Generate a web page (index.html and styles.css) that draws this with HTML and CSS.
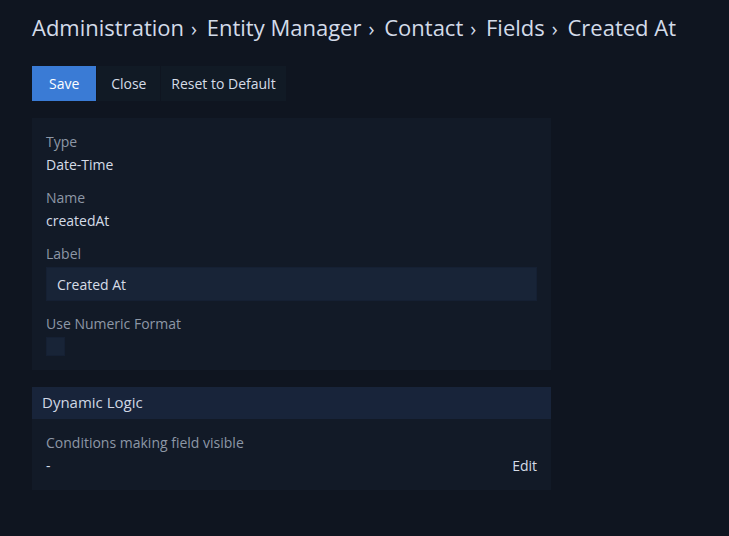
FILE: index.html
```html
<!DOCTYPE html>
<html lang="en">
<head>
  <meta charset="UTF-8">
  <title>Created At - Fields</title>
  <link rel="stylesheet" href="styles.css">
</head>
<body>

  <div class="page">
    <h1 class="breadcrumb">
      <span>Administration</span><span class="sep">›</span>
      <span>Entity Manager</span><span class="sep">›</span>
      <span>Contact</span><span class="sep">›</span>
      <span>Fields</span><span class="sep">›</span>
      <span>Created At</span>
    </h1>

    <div class="btn-group">
      <button class="btn btn-primary">Save</button>
      <button class="btn btn-close">Close</button>
      <button class="btn">Reset to Default</button>
    </div>

    <div class="panel">
      <div class="panel-body">
        <div class="field">
          <div class="field-label">Type</div>
          <div class="field-value">Date-Time</div>
        </div>
        <div class="field">
          <div class="field-label">Name</div>
          <div class="field-value">createdAt</div>
        </div>
        <div class="field">
          <div class="field-label">Label</div>
          <input class="form-control" type="text" value="Created At">
        </div>
        <div class="field">
          <div class="field-label">Use Numeric Format</div>
          <span class="checkbox"></span>
        </div>
      </div>
    </div>

    <div class="panel">
      <div class="panel-heading">Dynamic Logic</div>
      <div class="panel-body">
        <div class="field">
          <div class="field-label">Conditions making field visible</div>
          <div class="logic-row">
            <span class="field-value">-</span>
            <a href="#" class="edit-link">Edit</a>
          </div>
        </div>
      </div>
    </div>
  </div>

</body>
</html>
```

FILE: styles.css
```css
body {
  font-family: 'Open Sans', 'Noto Sans', sans-serif;
  font-size: 14px;
  margin: 0;
  background-color: #0f1520;
  color: #d5dce7;
}

.page {
  padding: 0 32px;
  width: 519px;
}

.breadcrumb {
  margin: 0;
  padding-top: 11px;
  font-size: 22px;
  font-weight: normal;
  line-height: 32px;
  color: #d3dbe9;
  white-space: nowrap;
}

.breadcrumb .sep {
  margin: 0 4px 0 7px;
  font-size: 20px;
}

.btn-group {
  display: flex;
  margin-top: 21px;
  margin-bottom: 17px;
}

.btn {
  font-family: inherit;
  font-size: 14px;
  color: #d5dce7;
  background-color: #111a25;
  border: none;
  height: 35px;
  padding: 0 10px;
  cursor: pointer;
}

.btn + .btn {
  border-left: 1px solid #0f1520;
}

.btn-primary {
  background-color: #3a7bd5;
  color: #ffffff;
  padding: 0 17px;
}

.btn-close {
  min-width: 64px;
}

.panel {
  background-color: #121a27;
  margin-bottom: 17px;
}

.panel-heading {
  background-color: #18243a;
  height: 32px;
  line-height: 31px;
  padding: 0 10px;
  font-size: 15px;
  color: #cfd7e4;
}

.panel-body {
  padding: 14px 14px 1px;
}

.field {
  margin-bottom: 13px;
}

.field-label {
  color: #8d97a6;
  line-height: 20px;
  margin-bottom: 3px;
}

.field-value {
  line-height: 20px;
}

.form-control {
  display: block;
  box-sizing: border-box;
  width: 100%;
  height: 34px;
  padding: 0 10px;
  font-family: inherit;
  font-size: 14px;
  color: #d5dce7;
  background-color: #182437;
  border: 1px solid #152033;
  outline: none;
}

.checkbox {
  display: block;
  box-sizing: border-box;
  width: 19px;
  height: 19px;
  background-color: #182437;
  border: 1px solid #152033;
}

.logic-row {
  display: flex;
  justify-content: space-between;
  line-height: 20px;
}

.edit-link {
  color: #d5dce7;
  text-decoration: none;
}
```
